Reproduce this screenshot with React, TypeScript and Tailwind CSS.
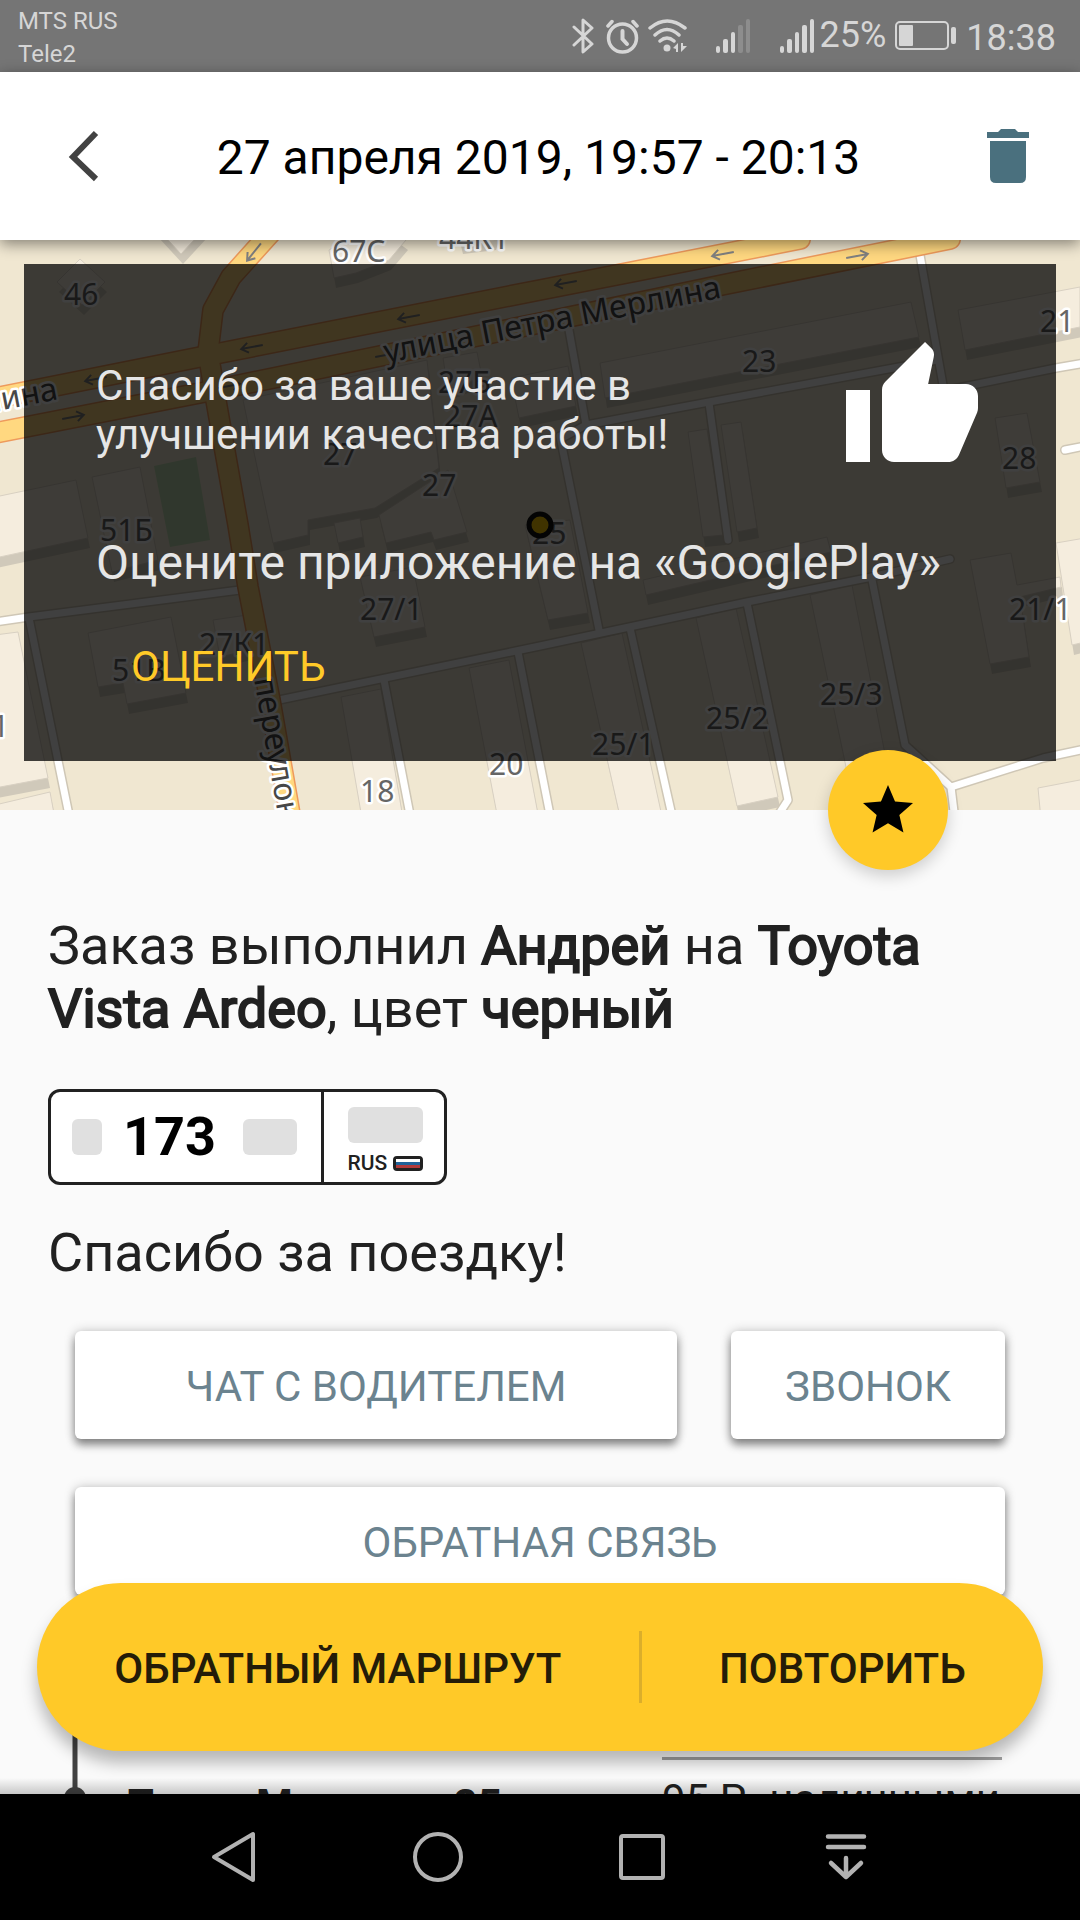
import React from "react";

type Label = { t: string; x: number; y: number };

const BUILDINGS: string[] = [
  "80,19 105,42 82,65 57,42",
  "181,-40 205,-12 181,14 157,-12",
  "329,10 379,-20 406,0 389,20 356,33 334,38",
  "455,-20 500,-20 494,0 461,4",
  "600,123 911,62 919,97 605,158",
  "958,70 1080,47 1080,87 965,110",
  "995,178 1027,173 1040,242 1006,248",
  "511,138 568,126 576,166 519,178",
  "443,118 477,112 482,137 448,150",
  "243,160 427,120 439,228 375,268 308,280 308,295 273,303",
  "334,283 360,278 363,297 338,303",
  "379,275 448,230 467,292 434,300 431,292 386,303",
  "92,237 140,227 158,320 112,332",
  "-5,257 76,240 88,298 -5,318",
  "88,393 171,377 186,453 127,464 123,443 98,447",
  "213,380 247,375 258,408 220,417",
  "360,337 413,327 425,387 374,397",
  "341,457 381,449 405,590 364,590",
  "469,428 509,420 541,590 500,590",
  "581,403 622,393 665,590 623,590",
  "696,378 736,368 778,557 737,566",
  "810,355 852,345 894,560 855,570",
  "525,285 570,280 588,373 548,380",
  "643,340 827,297 831,312 646,355",
  "970,320 1011,313 1017,345 1060,337 1061,347 1020,357 1029,417 990,424",
  "1056,303 1085,298 1085,402 1072,405",
  "1038,548 1085,539 1085,590 1042,590",
  "-5,395 18,392 48,538 -5,548",
  "-5,565 50,552 57,590 -5,590",
  "688,192 707,189 724,295 703,297",
  "721,185 741,182 757,288 737,292",
];

const WHITE_ROADS: string[] = [
  "920,15 943,145",
  "562,198 586,185 709,162 937,120",
  "943,151 1056,128 1085,123",
  "569,90 586,185",
  "560,196 599,390",
  "709,163 728,300",
  "279,460 540,406 747,362 867,338 950,319",
  "384,440 411,580",
  "518,412 551,580",
  "630,388 673,580",
  "747,363 788,560 775,580",
  "872,340 905,505 951,547 1043,518 1085,509",
  "951,547 955,580",
  "-5,382 29,377 240,350",
  "29,378 70,580",
  "1065,210 1085,206",
];

const YELLOW_ROADS: string[] = [
  "-10,159 200,117 540,50 800,-1",
  "-10,194 210,151 540,83 722,45 950,-1",
  "275,-12 231,37 213,70 208,112 215,155 238,285 248,347 270,460 291,580",
];

const LABELS: Label[] = [
  { t: "46", x: 64, y: 65 },
  { t: "67С", x: 332, y: 22 },
  { t: "44К1", x: 439, y: 9 },
  { t: "27Б", x: 438, y: 153 },
  { t: "27А", x: 444, y: 187 },
  { t: "27", x: 323, y: 225 },
  { t: "27", x: 422, y: 256 },
  { t: "51Б", x: 100, y: 301 },
  { t: "25", x: 532, y: 304 },
  { t: "27/1", x: 360, y: 380 },
  { t: "27К1", x: 199, y: 415 },
  { t: "51В", x: 112, y: 441 },
  { t: "18", x: 360, y: 562 },
  { t: "20", x: 489, y: 535 },
  { t: "25/1", x: 592, y: 515 },
  { t: "25/2", x: 706, y: 489 },
  { t: "25/3", x: 820, y: 465 },
  { t: "21/1", x: 1009, y: 380 },
  { t: "28", x: 1002, y: 229 },
  { t: "23", x: 742, y: 132 },
  { t: "21", x: 1040, y: 92 },
  { t: "1", x: -8, y: 497 },
];

const ARROWS: [number, number, number][] = [
  [254, 12, 129],
  [409, 77, 169],
  [252, 107, 169],
  [96, 139, 169],
  [73, 177, -11],
  [229, 146, -11],
  [723, 14, 169],
  [566, 43, 169],
  [857, 16, -11],
  [386, 115, -11],
];

function StreetMap() {
  return (
    <svg
      viewBox="0 0 1080 570"
      preserveAspectRatio="xMidYMid slice"
      className="block h-[570px] w-full"
      role="img"
      aria-label="Карта поездки"
    >
      <rect width="1080" height="570" fill="#f0e7d1" />
      <polygon points="154,226 196,217 210,300 170,307" fill="#bfdcb3" />
      <g strokeLinejoin="round">
        {BUILDINGS.map((p) => (
          <g key={p}>
            <polygon points={p} fill="#d0c9ba" transform="translate(2 10)" />
            <polygon points={p} fill="#f5edde" stroke="#d8d0c2" strokeWidth="1" />
          </g>
        ))}
      </g>
      <g fill="none" strokeLinecap="round" strokeLinejoin="round">
        {WHITE_ROADS.map((p) => (
          <polyline key={p} points={p} stroke="#cfc7b6" strokeWidth="10" />
        ))}
        {WHITE_ROADS.map((p) => (
          <polyline key={p} points={p} stroke="#ffffff" strokeWidth="7" />
        ))}
        {YELLOW_ROADS.map((p) => (
          <polyline key={p} points={p} stroke="#ee9a5c" strokeWidth="22" />
        ))}
        {YELLOW_ROADS.map((p) => (
          <polyline key={p} points={p} stroke="#ffd880" strokeWidth="19" />
        ))}
      </g>
      <g fill="none" stroke="#808080" strokeWidth="2">
        {ARROWS.map(([x, y, a]) => (
          <path
            key={`${x}-${y}`}
            d="M-11 0H11M4 -5L11 0L4 5"
            transform={`translate(${x} ${y}) rotate(${a})`}
          />
        ))}
      </g>
      <g
        fontFamily="'Noto Sans', sans-serif"
        fontSize="30"
        fill="#666666"
        stroke="#ffffff"
        strokeWidth="5"
        strokeLinejoin="round"
        style={{ paintOrder: "stroke" }}
      >
        {LABELS.map((l) => (
          <text key={`${l.t}-${l.x}`} x={l.x} y={l.y}>
            {l.t}
          </text>
        ))}
        <g fill="#474747" fontSize="32">
          <text transform="translate(386 123) rotate(-11)">улица Петра Мерлина</text>
          <text transform="translate(59 159) rotate(-11)" textAnchor="end">
            Мерлина
          </text>
          <text transform="translate(254 439) rotate(80)">переулок</text>
        </g>
      </g>
      <circle cx="540" cy="285" r="11" fill="#ffcc00" stroke="#111111" strokeWidth="5" />
    </svg>
  );
}

function StatusBar() {
  return (
    <div className="flex h-[72px] shrink-0 items-center bg-[#757575] pr-6 pl-[18px] text-[#d6d6d6]">
      <div className="mr-auto pt-1 text-[24px] leading-[33px]">
        <p>MTS RUS</p>
        <p>Tele2</p>
      </div>
      <svg className="mr-3 h-9 w-[22px]" viewBox="0 0 22 36" fill="none" stroke="currentColor" strokeWidth="3" strokeLinejoin="round" strokeLinecap="round">
        <path d="M2 9L20 26L11 34V2L20 10L2 27" />
      </svg>
      <svg className="mr-[9px] h-9 w-[33px]" viewBox="0 0 33 36" fill="none" stroke="currentColor" strokeLinecap="round">
        <circle cx="16.500" cy="20" r="14" strokeWidth="3.500" />
        <path d="M16.500 13V21L21 26" strokeWidth="4" />
        <path d="M2 8L6 3.500M31 8L27 3.500" strokeWidth="3.500" />
      </svg>
      <svg className="mr-7 h-9 w-10" viewBox="0 0 40 36" fill="none" stroke="currentColor" strokeWidth="3.500" strokeLinecap="round">
        <path d="M2 10Q19 -4 37 10M7 17Q19 6 31 17M12 23Q19 17 26 23" />
        <circle cx="19" cy="30" r="3.500" fill="currentColor" stroke="none" />
        <path d="M30 25V34H28V31L25 30ZM33 34V25H35V28L39 28Z" fill="currentColor" stroke="none" />
      </svg>
      <svg className="mr-[30px] h-9 w-[34px]" viewBox="0 0 34 36" fill="currentColor">
        <rect x="0" y="28" width="4" height="7" rx="2" />
        <rect x="7" y="21" width="5" height="14" rx="2" />
        <rect x="15" y="14" width="4" height="21" rx="2" />
        <rect x="22" y="7" width="5" height="28" rx="2" opacity="0.25" />
        <rect x="30" y="1" width="4" height="34" rx="2" opacity="0.25" />
      </svg>
      <svg className="mr-1.5 h-9 w-[34px]" viewBox="0 0 34 36" fill="currentColor">
        <rect x="0" y="28" width="4" height="7" rx="2" />
        <rect x="7" y="21" width="5" height="14" rx="2" />
        <rect x="15" y="14" width="4" height="21" rx="2" />
        <rect x="22" y="7" width="5" height="28" rx="2" />
        <rect x="30" y="1" width="4" height="34" rx="2" />
      </svg>
      <span className="mr-[9px] pb-0.5 text-[36px] leading-none">25%</span>
      <svg className="mr-[9px] h-9 w-[62px]" viewBox="0 0 62 36" fill="currentColor">
        <rect x="1" y="4" width="52" height="27" rx="4" fill="none" stroke="currentColor" strokeWidth="2" />
        <rect x="4" y="7" width="14" height="21" rx="1" />
        <rect x="56" y="9" width="5" height="17" rx="2" />
      </svg>
      <span className="pt-1 text-[36px] leading-none">18:38</span>
    </div>
  );
}

function Header() {
  return (
    <header className="relative z-10 flex h-[168px] shrink-0 items-center bg-white pr-[51px] pl-12 shadow-[0_4px_14px_rgba(0,0,0,0.45)]">
      <button aria-label="Назад" className="flex h-[72px] w-[72px] items-center pl-5 text-[#424242]">
        <svg className="h-[52px] w-[32px]" viewBox="0 0 32 52" fill="none" stroke="currentColor" strokeWidth="6">
          <path d="M28 3L5 27L28 49" />
        </svg>
      </button>
      <h1 className="flex-1 pt-1 text-center text-[48px] leading-[56px] text-black">27 апреля 2019, 19:57 - 20:13</h1>
      <button aria-label="Удалить" className="flex h-[72px] w-[72px] items-center justify-end text-[#4a707e]">
        <svg className="h-[54px] w-[42px]" viewBox="0 0 42 54" fill="currentColor">
          <path d="M0 3H11L14 0H28L31 3H42V9H0ZM3 12H39V48Q39 54 33 54H9Q3 54 3 48Z" />
        </svg>
      </button>
    </header>
  );
}

function RateCard() {
  return (
    <section className="absolute inset-x-6 top-6 flex h-[497px] flex-col items-start bg-black/75 p-[72px] text-[#e6e6e6]">
      <div className="flex w-full items-start justify-between">
        <p className="mt-[25px] max-w-[600px] text-[42px] leading-[49px]">Спасибо за ваше участие в улучшении качества работы!</p>
        <svg className="h-36 w-36 text-white" viewBox="0 0 24 24" fill="currentColor" aria-hidden="true">
          <path d="M1 21h4V9H1v12zm22-11c0-1.100-.9-2-2-2h-6.310l.95-4.570.03-.32c0-.41-.17-.79-.44-1.060L14.170 1 7.590 7.590C7.220 7.950 7 8.450 7 9v10c0 1.100.9 2 2 2h9c.83 0 1.540-.5 1.840-1.220l3.020-7.050c.09-.23.14-.47.14-.73v-2z" />
        </svg>
      </div>
      <p className="mt-[55px] text-[48px] leading-[56px]">Оцените приложение на «GooglePlay»</p>
      <button className="mt-[51px] ml-[35px] text-[42px] leading-[49px] text-[#ffca28]">ОЦЕНИТЬ</button>
    </section>
  );
}

function LicensePlate() {
  return (
    <div className="mt-[49px] flex h-24 w-[399px] rounded-xl border-3 border-[#212121] bg-white">
      <div className="flex flex-1 items-center justify-between border-r-3 border-[#212121] pr-6 pl-[21px]">
        <span className="h-9 w-[30px] rounded-md bg-[#e0e0e0]" />
        <span className="-ml-1.5 text-[54px] leading-none font-bold text-black">173</span>
        <span className="h-9 w-[54px] rounded-md bg-[#e0e0e0]" />
      </div>
      <div className="flex w-[120px] flex-col items-center pt-[15px] pl-0.5">
        <span className="h-9 w-[75px] rounded-md bg-[#e0e0e0]" />
        <div className="mt-2 flex w-[75px] items-center justify-between">
          <span className="text-[21px] leading-6 font-medium text-[#212121]">RUS</span>
          <span className="flex h-[15px] w-[30px] flex-col rounded-sm border-3 border-[#212121]">
            <span className="flex-1 bg-white" />
            <span className="flex-1 bg-[#1f6299]" />
            <span className="flex-1 bg-[#b03a3a]" />
          </span>
        </div>
      </div>
    </div>
  );
}

const flatButton =
  "h-[108px] rounded-md bg-white pt-0.5 text-[42px] leading-[49px] text-[#6b838f] shadow-[0_6px_9px_rgba(0,0,0,0.42),0_0_12px_rgba(0,0,0,0.2)]";

const strong = "font-normal [-webkit-text-stroke:2px_#212121]";

function TripDetails() {
  return (
    <section className="flex gap-[60px] pl-4">
      <div className="flex flex-1 items-start">
        <svg className="h-[214px] w-[22px] shrink-0 text-[#424242]" viewBox="0 0 22 214" fill="currentColor" aria-hidden="true">
          <rect x="9" y="60" width="4" height="144" />
          <rect x="8" y="60" width="6" height="144" opacity="0.5" />
          <circle cx="11" cy="203" r="11" />
        </svg>
        <p className="mt-[185px] ml-10 text-[42px] leading-[49px] font-bold whitespace-nowrap text-[#212121]">Петра Мерлина, 25</p>
      </div>
      <div className="mt-[162px] mr-[30px] w-[340px] border-t-3 border-[#9e9e9e] pt-[15px] text-[42px] leading-[49px] whitespace-nowrap text-[#212121]">
        95 Р., наличными
      </div>
    </section>
  );
}

function ActionBar() {
  return (
    <div className="absolute inset-x-[37px] bottom-[43px] flex h-[168px] items-center rounded-full bg-[#ffc928] text-[42px] leading-[49px] font-medium text-[#241c08] shadow-[0_12px_16px_rgba(0,0,0,0.27)]">
      <button className="h-full flex-[3] pt-0.5">ОБРАТНЫЙ МАРШРУТ</button>
      <span className="h-[72px] w-[3px] bg-[#dbae2b]" />
      <button className="h-full flex-[2] pt-0.5">ПОВТОРИТЬ</button>
    </div>
  );
}

function SystemNav() {
  const key = "flex h-full w-[204px] items-center justify-center";
  return (
    <nav className="flex h-[126px] shrink-0 justify-center bg-black text-[#b2b2b2]">
      <button aria-label="Назад" className={key}>
        <svg className="h-[52px] w-[52px]" viewBox="0 0 52 52" fill="none" stroke="currentColor" strokeWidth="4" strokeLinejoin="round">
          <path d="M45 3V49L6 26Z" />
        </svg>
      </button>
      <button aria-label="Домой" className={key}>
        <svg className="h-[52px] w-[52px]" viewBox="0 0 52 52" fill="none" stroke="currentColor" strokeWidth="4">
          <circle cx="26" cy="26" r="23" />
        </svg>
      </button>
      <button aria-label="Недавние" className={key}>
        <svg className="h-[52px] w-[52px]" viewBox="0 0 52 52" fill="none" stroke="currentColor" strokeWidth="4">
          <rect x="5" y="5" width="42" height="42" rx="2" />
        </svg>
      </button>
      <button aria-label="Уведомления" className={key}>
        <svg className="h-[52px] w-[52px]" viewBox="0 0 52 52" fill="none" stroke="currentColor" strokeWidth="4.500" strokeLinecap="round" strokeLinejoin="round">
          <path d="M8 5.500H44M8 16H44M26 27V46M11 32L26 46L41 32" />
        </svg>
      </button>
    </nav>
  );
}

export default function App() {
  return (
    <div className="flex h-screen flex-col overflow-hidden bg-[#fafafa] font-['Roboto',sans-serif]">
      <StatusBar />
      <Header />
      <main className="relative min-h-0 flex-1 overflow-hidden">
        <div className="relative">
          <StreetMap />
          <RateCard />
          <button
            aria-label="В избранное"
            className="absolute right-[132px] -bottom-[60px] flex h-[120px] w-[120px] items-center justify-center rounded-full bg-[#ffc928] text-black shadow-[0_6px_16px_rgba(0,0,0,0.18)]"
          >
            <svg className="h-[60px] w-[60px]" viewBox="0 0 24 24" fill="currentColor">
              <path d="M12 17.270L18.180 21l-1.640-7.030L22 9.240l-7.190-.61L12 2 9.190 8.630 2 9.240l5.460 4.730L5.820 21z" />
            </svg>
          </button>
        </div>
        <div className="px-12 pt-[104px]">
          <h2 className="text-[54px] leading-[63px] font-normal text-[#212121]">
            Заказ выполнил <b className={strong}>Андрей</b> на <b className={strong}>Toyota Vista Ardeo</b>, цвет{" "}
            <b className={strong}>черный</b>
          </h2>
          <LicensePlate />
          <p className="mt-9 text-[54px] leading-[63px] text-[#212121]">Спасибо за поездку!</p>
          <div className="mx-[27px] mt-[47px] flex gap-[54px]">
            <button className={`${flatButton} flex-1`}>ЧАТ С ВОДИТЕЛЕМ</button>
            <button className={`${flatButton} w-[274px]`}>ЗВОНОК</button>
          </div>
          <div className="mx-[27px] mt-12 flex">
            <button className={`${flatButton} flex-1`}>ОБРАТНАЯ СВЯЗЬ</button>
          </div>
          <TripDetails />
        </div>
        <div className="pointer-events-none absolute inset-x-0 bottom-0 h-4 bg-gradient-to-t from-black/20 to-transparent" />
        <ActionBar />
      </main>
      <SystemNav />
    </div>
  );
}
